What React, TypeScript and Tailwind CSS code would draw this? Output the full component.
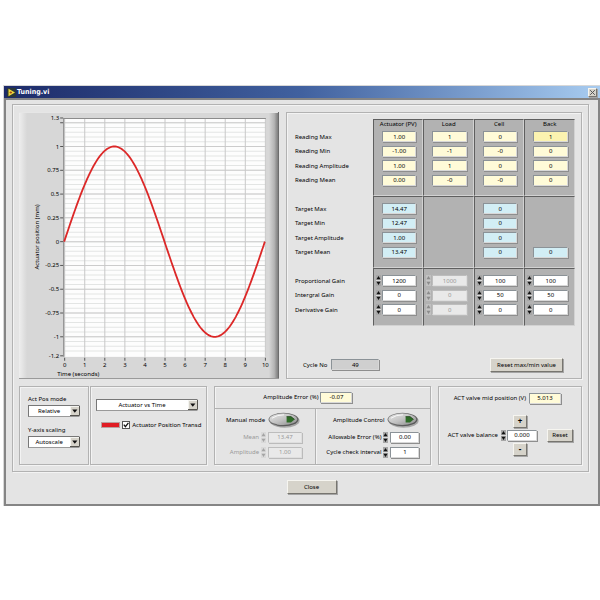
import React from "react";
import clsx from "clsx";

const etched =
  "border border-[#b2b2b2] shadow-[1px_1px_0_#f3f3f3,inset_1px_1px_0_#f3f3f3]";

const raised =
  "flex items-center justify-center bg-[#d6d3ca] border border-t-[#f6f5f0] border-l-[#f6f5f0] border-r-[#77756f] border-b-[#77756f] shadow-[1px_1px_0_#a5a5a5]";

const tones = {
  yellow: "bg-[#fffbd8]",
  active: "bg-[#fbf3b0]",
  blue: "bg-[#d2eef5]",
  white: "bg-white",
  gray: "bg-[#cfcfcf]",
  disabled: "bg-[#e9e9e9] text-[#999]",
};

type Tone = keyof typeof tones;

const Field = ({
  value,
  tone,
  label,
  id,
  className,
}: {
  value: string;
  tone: Tone;
  label?: string;
  id?: string;
  className?: string;
}) => (
  <input
    id={id}
    aria-label={label}
    defaultValue={value}
    readOnly={tone !== "white"}
    disabled={tone === "disabled"}
    className={clsx(
      "block h-[11px] min-w-0 border p-0 text-center leading-none outline-none",
      tones[tone],
      tone === "disabled"
        ? "border-t-[#bdbdbd] border-l-[#bdbdbd] border-r-[#dedede] border-b-[#dedede] shadow-[1px_1px_0_#bbb]"
        : "border-t-[#8b9297] border-l-[#8b9297] border-r-[#d8d8d8] border-b-[#d8d8d8] shadow-[1px_1px_0_#8e8e8e]",
      className
    )}
  />
);

const Spinner = ({ dim = false }: { dim?: boolean }) => (
  <svg
    viewBox="0 0 5 11"
    className={clsx("h-[11px] w-[5px] shrink-0", dim && "opacity-50")}
    aria-hidden="true"
  >
    <rect width="5" height="11" fill={dim ? "#d0d0d0" : "#a6a6a6"} />
    <path d="M0 5.5h5" stroke="#ddd" />
    <path d="M2.5 1L4.5 4.2H0.5Z M2.5 10L4.5 6.8H0.5Z" fill={dim ? "#666" : "#111"} />
  </svg>
);

const Select = ({ id, value, className }: { id: string; value: string; className?: string }) => (
  <div className={clsx("relative", className)}>
    <select
      id={id}
      aria-label={value}
      className="block h-[12px] w-full appearance-none border border-t-[#777] border-l-[#777] border-r-[#eee] border-b-[#999] bg-white py-0 pl-0 pr-[10px] text-center leading-none [text-align-last:center]"
    >
      <option>{value}</option>
    </select>
    <svg viewBox="0 0 10 10" className="pointer-events-none absolute right-0 top-px h-[10px] w-[10px]">
      <rect x="0.5" y="0.5" width="9" height="9" fill="#d6d3ca" stroke="#f4f4f0" />
      <path d="M0 9.5H9.5V0" fill="none" stroke="#55534e" />
      <path d="M2.2 3.6H7.4L4.8 6.8Z" fill="#111" />
    </svg>
  </div>
);

const Toggle = ({ id, label }: { id: string; label: string }) => (
  <button type="button" id={id} aria-label={label} className="h-[16px] w-[32px] shrink-0">
    <svg viewBox="0 0 32 16" className="block h-full w-full">
      <defs>
        <linearGradient id={`${id}-rim`} x1="0" y1="0" x2="1" y2="1">
          <stop offset="0" stopColor="#8a8a8a" />
          <stop offset="1" stopColor="#4c4c4c" />
        </linearGradient>
        <linearGradient id={`${id}-face`} x1="0" y1="0" x2="1" y2="1">
          <stop offset="0" stopColor="#e6e6e6" />
          <stop offset="0.5" stopColor="#c2c2c2" />
          <stop offset="1" stopColor="#8a8a8a" />
        </linearGradient>
      </defs>
      <ellipse cx="16.6" cy="8.8" rx="15" ry="7" fill="#a6a6a6" />
      <ellipse cx="15.5" cy="7.5" rx="15" ry="6.8" fill={`url(#${id}-rim)`} />
      <ellipse cx="15.3" cy="7.3" rx="13.8" ry="5.7" fill={`url(#${id}-face)`} />
      <path d="M4 6.2Q9 2.8 16 2.8" stroke="#f7f7f7" fill="none" />
      <path d="M18.6 4.6H23L26.6 7.4L23 10.4H18.6Z" fill="#2f6b28" />
      <path d="M18.6 4.6H23L26.6 7.4" stroke="#1b3d17" strokeWidth="0.7" fill="none" />
    </svg>
  </button>
);

// plot area: x 45..245, y 6..243, one unit on the y axis is 94.8 high
const plotX = (t: number) => 45 + t * 20;
const plotY = (v: number) => 129.2 - v * 94.8;

const yTicks = [1.3, 1, 0.75, 0.5, 0.25, 0, -0.25, -0.5, -0.75, -1, -1.2];
const xTicks = [0, 1, 2, 3, 4, 5, 6, 7, 8, 9, 10];
const minorLines = Array.from({ length: 49 }, (_, i) => (i - 23) / 20);

const wave = Array.from({ length: 201 }, (_, i) => {
  const t = i / 20;
  return `${plotX(t).toFixed(1)},${plotY(Math.sin((t * Math.PI) / 5)).toFixed(1)}`;
}).join(" ");

const Graph = () => (
  <svg viewBox="0 0 259 266" className="block h-auto w-full text-[6px]">
    <defs>
      <linearGradient id="left-edge">
        <stop offset="0" stopColor="#eeeeee" />
        <stop offset="1" stopColor="#d7d7d7" />
      </linearGradient>
      <linearGradient id="right-edge">
        <stop offset="0" stopColor="#d7d7d7" />
        <stop offset="0.6" stopColor="#b4b4b4" />
        <stop offset="1" stopColor="#7c7c7c" />
      </linearGradient>
    </defs>
    <rect width="259" height="266" fill="#d7d7d7" />
    <rect width="8" height="266" fill="url(#left-edge)" />
    <rect x="249" width="9" height="266" fill="url(#right-edge)" />
    <path d="M258.5 0V266" stroke="#636363" />
    <path d="M0 0.5H258" stroke="#e6e6e6" />
    <path d="M0 265.5H259" stroke="#9a9a9a" />
    <rect x="45" y="6" width="201" height="238" fill="#fdfdfd" />
    {minorLines.map((v) => (
      <path key={v} d={`M45 ${plotY(v)}H246`} stroke="#e3e5e4" />
    ))}
    {[1.25, ...yTicks.slice(1, 10)].map((v) => (
      <path key={v} d={`M45 ${plotY(v)}H246`} stroke="#cccccc" />
    ))}
    {xTicks.map((t) => (
      <path key={t} d={`M${plotX(t) + 0.5} 6V244`} stroke="#c8c8c8" />
    ))}
    <path d="M44.5 244V6.5H246" fill="none" stroke="#8c8c8c" />
    {[1.25, ...yTicks].map((v) => (
      <path key={v} d={`M41 ${plotY(v)}H44`} stroke="#555" />
    ))}
    {yTicks.map((v) => (
      <text key={v} x="40" y={plotY(v) + 2} textAnchor="end">
        {v}
      </text>
    ))}
    {xTicks.map((t) => (
      <g key={t}>
        <path d={`M${plotX(t) + 0.5} 245V248`} stroke="#555" />
        <text x={plotX(t) + 0.5} y="254" textAnchor="middle">
          {t}
        </text>
      </g>
    ))}
    <text x="38" y="263">
      Time (seconds)
    </text>
    <text transform="translate(20 157) rotate(-90)">
      Actuator position (mm)
    </text>
    <polyline points={wave} fill="none" stroke="#dc2828" strokeWidth="1.8" />
  </svg>
);

type Row = { label: string; cells: (string | null)[] };
type Group = { tone: Tone; spin?: boolean; rows: Row[] };

const columns = ["Actuator (PV)", "Load", "Cell", "Back"];

const groups: Group[] = [
  {
    tone: "yellow",
    rows: [
      { label: "Reading Max", cells: ["1.00", "1", "0", "1"] },
      { label: "Reading Min", cells: ["-1.00", "-1", "-0", "0"] },
      { label: "Reading Amplitude", cells: ["1.00", "1", "0", "0"] },
      { label: "Reading Mean", cells: ["0.00", "-0", "-0", "0"] },
    ],
  },
  {
    tone: "blue",
    rows: [
      { label: "Target Max", cells: ["14.47", null, "0", null] },
      { label: "Target Min", cells: ["12.47", null, "0", null] },
      { label: "Target Amplitude", cells: ["1.00", null, "0", null] },
      { label: "Target Mean", cells: ["13.47", null, "0", "0"] },
    ],
  },
  {
    tone: "white",
    spin: true,
    rows: [
      { label: "Proportional Gain", cells: ["1200", "1000", "100", "100"] },
      { label: "Intergral Gain", cells: ["0", "0", "50", "50"] },
      { label: "Derivative Gain", cells: ["0", "0", "0", "0"] },
    ],
  },
];

const cell = "border-l border-r border-l-[#5f5f5f] border-r-[#d2d2d2] bg-[#b2b2b2] p-0";

const cellTone = (group: Group, row: number, col: number): Tone => {
  if (group.spin && col === 1) return "disabled";
  if (group.tone === "yellow" && row === 0 && col === 3) return "active";
  return group.tone;
};

const Readings = () => (
  <table className="w-full table-fixed border-separate border-spacing-0">
    <colgroup>
      <col className="w-[78px]" />
      {columns.map((c) => (
        <col key={c} />
      ))}
    </colgroup>
    {groups.map((group, g) => (
      <tbody key={group.tone}>
        <tr className={g === 0 ? "h-[10px]" : "h-[5px]"}>
          <td className="p-0" />
          {columns.map((c) =>
            g === 0 ? (
              <th
                key={c}
                scope="col"
                className={clsx(cell, "whitespace-nowrap border-t border-t-[#5f5f5f] font-normal leading-[9px]")}
              >
                {c}
              </th>
            ) : (
              <td key={c} className={clsx(cell, "border-t border-t-[#5f5f5f]")} />
            )
          )}
        </tr>
        {group.rows.map((row, r) => (
          <tr key={row.label} className="h-[14px] even:h-[15px]">
            <th scope="row" className="whitespace-nowrap p-0 text-left font-normal leading-[12px]">
              {row.label}
            </th>
            {row.cells.map((value, c) => (
              <td key={columns[c]} className={cell}>
                {value !== null && (
                  <div className="flex items-center gap-px pl-[2px] pr-[6px]">
                    {group.spin ? <Spinner dim={c === 1} /> : <span className="w-[5px] shrink-0" />}
                    <Field
                      value={value}
                      tone={cellTone(group, r, c)}
                      label={`${row.label} ${columns[c]}`}
                      className="w-full"
                    />
                  </div>
                )}
              </td>
            ))}
          </tr>
        ))}
        <tr className="h-[9px]">
          <td className="p-0" />
          {columns.map((c) => (
            <td key={c} className={clsx(cell, "border-b border-b-[#d2d2d2]")} />
          ))}
        </tr>
      </tbody>
    ))}
  </table>
);

const SpinRow = ({
  id,
  label,
  value,
  disabled = false,
}: {
  id: string;
  label: string;
  value: string;
  disabled?: boolean;
}) => (
  <div className="flex items-center justify-end gap-[2px]">
    <label htmlFor={id} className={clsx("whitespace-nowrap", disabled && "text-[#999]")}>
      {label}
    </label>
    <Spinner dim={disabled} />
    <Field
      id={id}
      value={value}
      tone={disabled ? "disabled" : "white"}
      className={disabled ? "w-[34px]" : "w-[29px]"}
    />
  </div>
);

const StepButton = ({ sign, label }: { sign: string; label: string }) => (
  <button
    type="button"
    aria-label={label}
    className={clsx(raised, "col-start-2 ml-[6px] h-[13px] w-[14px] text-[8px] font-bold")}
  >
    {sign}
  </button>
);

const TitleBar = () => (
  <header className="flex h-[12px] items-center bg-linear-to-r from-[#1d2b69] via-[#41619f] to-[#a8ccf0] px-[3px]">
    <svg viewBox="0 0 9 9" className="h-[9px] w-[9px]" aria-hidden="true">
      <rect width="9" height="9" fill="#2b3838" />
      <path d="M1.5 0.8L8 4.5L1.5 8.2Z" fill="#f0d93a" />
      <path d="M2.6 4.5H5M3.8 3.3V5.7" stroke="#a33a1c" strokeWidth="0.8" />
    </svg>
    <h1 className="grow pl-px font-['DejaVu_Sans_Condensed','DejaVu_Sans',sans-serif] text-[7px] font-bold text-white">
      Tuning.vi
    </h1>
    <button type="button" aria-label="Close window" className={clsx(raised, "h-[9px] w-[9px]")}>
      <svg viewBox="0 0 7 7" className="h-[7px] w-[7px]">
        <path d="M1.2 1.2L5.8 5.8M5.8 1.2L1.2 5.8" stroke="#555" />
      </svg>
    </button>
  </header>
);

const App = () => {
  return (
    <div className="min-h-screen bg-white pl-[3px] pt-[85px] font-['Noto_Sans','Open_Sans',sans-serif] text-[6px] leading-[10px] text-black">
      <main className="border-l border-t border-[#d8d8d8] bg-[#e4e4e4]">
        <TitleBar />
        <div className="border-2 border-[#858585] pb-[10px] pl-[6px] pr-[9px] pt-[4px]">
          <div className={clsx(etched, "px-[6px] pb-[6px] pt-[7px]")}>
            <div className="grid grid-cols-[259fr_295fr] gap-[7px]">
              <Graph />
              <section className={clsx(etched, "flex flex-col justify-between p-[6px] pl-[8px]")}>
                <Readings />
                <div className="flex items-center justify-between pl-[8px] pr-[12px]">
                  <div className="flex items-center gap-[4px]">
                    <label htmlFor="cycle">Cycle No</label>
                    <Field id="cycle" value="49" tone="gray" className="w-[48px]" />
                  </div>
                  <button type="button" className={clsx(raised, "h-[14px] w-[73px] whitespace-nowrap")}>
                    Reset max/min value
                  </button>
                </div>
              </section>
            </div>

            <div className="mt-[7px] grid grid-cols-[187fr_217fr_143fr] gap-[7px]">
              <div className="grid grid-cols-[70fr_116fr] gap-px">
                <section className={clsx(etched, "min-w-0 px-[8px] pt-[7px]")}>
                  <label htmlFor="mode">Act Pos mode</label>
                  <Select id="mode" value="Relative" className="mt-px" />
                  <label htmlFor="scaling" className="mt-[8px] block">
                    Y-axis scaling
                  </label>
                  <Select id="scaling" value="Autoscale" className="mt-px" />
                </section>
                <section className={clsx(etched, "min-w-0 pl-[5px] pt-[12px]")}>
                  <Select id="plot" value="Actuator vs Time" className="mr-[8px]" />
                  <div className="mt-[9px] flex items-center pl-[5px]">
                    <span className="mr-[2px] h-[6px] w-[19px] shrink-0 border border-[#b9a0a0] bg-[#e01c24]" />
                    <label className="flex items-center gap-[2px] whitespace-nowrap">
                      <input
                        type="checkbox"
                        defaultChecked
                        className="peer h-[8px] w-[8px] shrink-0 appearance-none border border-[#555] bg-white"
                      />
                      <svg viewBox="0 0 8 8" className="-ml-[10px] hidden h-[8px] w-[8px] shrink-0 peer-checked:block">
                        <path d="M1.8 3.6L3.4 5.6L6.4 1.8" fill="none" stroke="#111" strokeWidth="1.3" />
                      </svg>
                      Actuator Position Transd
                    </label>
                  </div>
                </section>
              </div>

              <section className={clsx(etched, "flex h-[79px] min-w-0 flex-col")}>
                <div className="flex h-[22px] items-center justify-end gap-[2px] border-b border-[#b2b2b2] pr-[78px]">
                  <label htmlFor="error">Amplitude Error (%)</label>
                  <Field id="error" value="-0.07" tone="yellow" className="w-[32px]" />
                </div>
                <div className="grid grow grid-cols-[101fr_114fr]">
                  <div className="flex flex-col gap-[4px] border-r border-[#b2b2b2] pr-[13px] pt-[3px] shadow-[1px_0_0_#f3f3f3]">
                    <div className="flex items-center justify-end gap-[3px] pr-[2px]">
                      <label htmlFor="manual" className="whitespace-nowrap">
                        Manual mode
                      </label>
                      <Toggle id="manual" label="Manual mode" />
                    </div>
                    <SpinRow id="mean" label="Mean" value="13.47" disabled />
                    <SpinRow id="amplitude" label="Amplitude" value="1.00" disabled />
                  </div>
                  <div className="flex flex-col gap-[4px] pr-[11px] pt-[3px]">
                    <div className="flex items-center justify-end gap-[3px]">
                      <label htmlFor="control" className="whitespace-nowrap">
                        Amplitude Control
                      </label>
                      <Toggle id="control" label="Amplitude Control" />
                    </div>
                    <SpinRow id="allowable" label="Allowable Error (%)" value="0.00" />
                    <SpinRow id="interval" label="Cycle check interval" value="1" />
                  </div>
                </div>
              </section>

              <section className={clsx(etched, "min-w-0 px-[8px] pt-[6px]")}>
                <div className="flex items-center justify-end gap-[3px] pr-[12px]">
                  <label htmlFor="mid" className="whitespace-nowrap">
                    ACT valve mid position (V)
                  </label>
                  <Field id="mid" value="5.013" tone="yellow" className="w-[32px]" />
                </div>
                <div className="mt-[11px] grid grid-cols-[1fr_30px_36px] items-center gap-y-px">
                  <StepButton sign="+" label="Increase balance" />
                  <div className="col-start-1 flex items-center justify-end gap-[3px] pr-px">
                    <label htmlFor="balance" className="whitespace-nowrap">
                      ACT valve balance
                    </label>
                    <Spinner />
                  </div>
                  <Field id="balance" value="0.000" tone="white" className="w-full" />
                  <button type="button" className={clsx(raised, "ml-auto h-[13px] w-[26px]")}>
                    Reset
                  </button>
                  <StepButton sign="-" label="Decrease balance" />
                </div>
              </section>
            </div>
          </div>
          <div className="flex justify-center pl-[22px] pt-[8px]">
            <button type="button" className={clsx(raised, "h-[14px] w-[50px]")}>
              Close
            </button>
          </div>
        </div>
      </main>
    </div>
  );
};

export default App;
